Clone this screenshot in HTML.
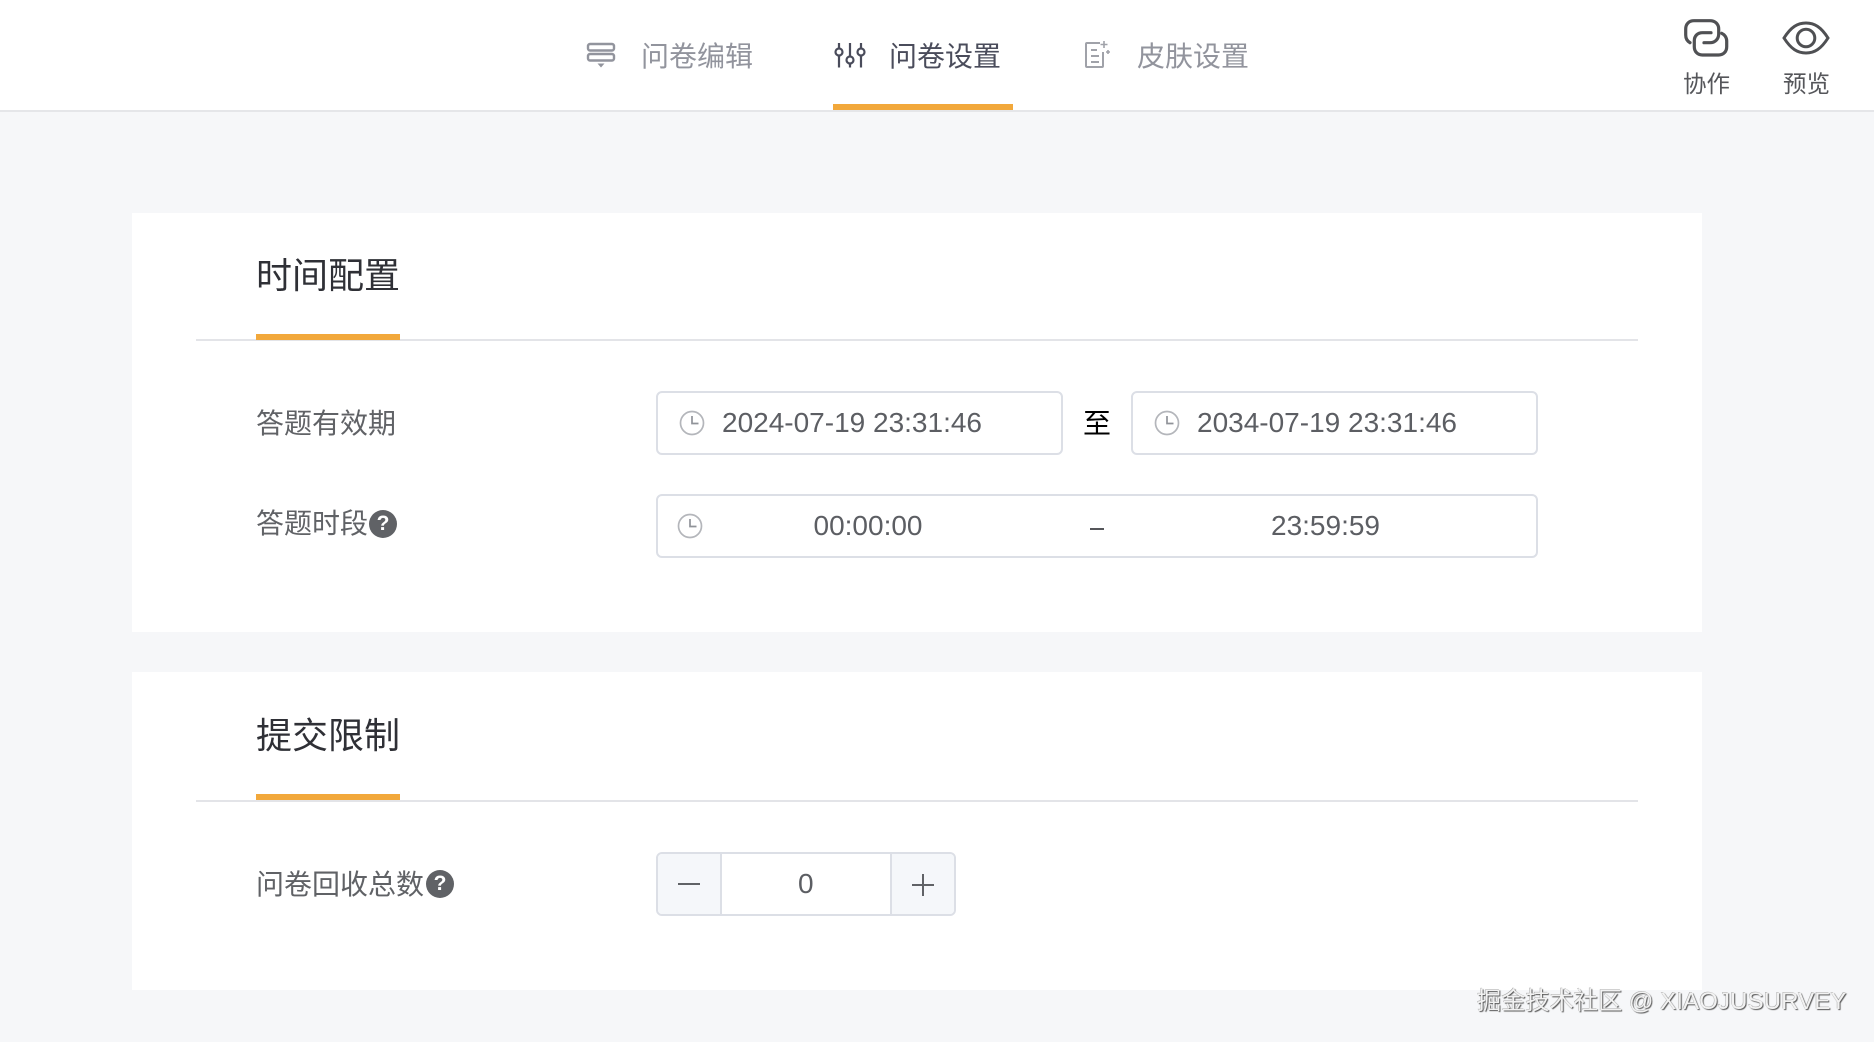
<!DOCTYPE html>
<html lang="zh"><head><meta charset="utf-8"><title>问卷设置</title>
<style>
html,body{margin:0;padding:0}
body{width:1874px;height:1042px;position:relative;overflow:hidden;background:#f6f7f9;font-family:"Liberation Sans","Noto Sans CJK SC",sans-serif;color:#606266;filter:blur(.3px)}
.a{position:absolute}
.t{position:absolute;white-space:nowrap;line-height:40px;height:40px;transform:translateY(-20px)}
.tab{font-size:28px;color:#92949d}
.on{color:#4a4c5b}
.ic{position:absolute;overflow:visible;fill:none}
.card{position:absolute;left:132px;width:1570px;background:#fff}
.line{position:absolute;left:196px;width:1442px;height:2px;background:#e3e4e8}
.bar{position:absolute;left:256px;width:144px;height:6px;background:#f2a83b}
.title{color:#2f3036;font-size:36px}
.lab{font-size:28px;color:#606266}
.box{position:absolute;box-sizing:border-box;border:2px solid #dcdfe6;border-radius:6px;background:#fff}
.val{font-size:28px;color:#5c5e63}
.q{position:absolute;width:28px;height:28px;border-radius:50%;background:#606266;color:#fff;font:bold 21px/28px "Liberation Sans",sans-serif;text-align:center}
</style></head><body>

<div class="a" style="left:0;top:0;width:1874px;height:110px;background:#fff"></div>
<div class="a" style="left:0;top:110px;width:1874px;height:2px;background:#e5e6e9"></div>

<svg class="ic" style="left:586px;top:42px" width="30" height="28" viewBox="0 0 30 28" stroke="#92949d" stroke-width="2.400"><rect x="2" y="2" width="26" height="6.500" rx="2"/><rect x="2" y="12" width="26" height="6.500" rx="2"/><path d="M11.500 21.500h7l-3.500 4z" fill="#92949d" stroke="none"/></svg>
<div class="t tab" style="left:641px;top:57px">问卷编辑</div>

<svg class="ic" style="left:835.500px;top:42px" width="30" height="30" viewBox="0 0 30 30" stroke="#4a4c5b" stroke-width="2.200"><path d="M3 1v5.500M3 13.500v12M14 1v13.500M14 21.500v4M25 1v5.500M25 13.500v12"/><circle cx="3" cy="10" r="3.500"/><circle cx="14" cy="18" r="3.500"/><circle cx="25" cy="10" r="3.500"/></svg>
<div class="t tab on" style="left:889px;top:57px">问卷设置</div>
<div class="a" style="left:833px;top:104px;width:180px;height:6px;background:#f2a83b"></div>

<svg class="ic" style="left:1084px;top:40px" width="28" height="30" viewBox="0 0 28 30" stroke="#a0a2a9" stroke-width="2"><path d="M16 3H3a1 1 0 0 0-1 1v22a1 1 0 0 0 1 1h15a1 1 0 0 0 1-1V12M7 10h6M7 16h8M7 22h8"/><path d="M20 1v7M16.500 4.500h7M24 10v4M22 12h4" stroke-width="1.600"/></svg>
<div class="t tab" style="left:1137px;top:57px">皮肤设置</div>

<svg class="ic" style="left:1684px;top:19px" width="44" height="38" viewBox="0 0 44 38" stroke="#505154" stroke-width="3.200" stroke-linecap="round"><path d="M6 23.700C3 22 1.700 19.500 1.700 16V10C1.700 5 5 1.700 10 1.700H26C31 1.700 34.700 5 34.700 10V15C34.700 20 31 23.700 26 23.700H20"/><path d="M27 13.700H18.500C13.500 13.700 10.300 17 10.300 21.700V27.700C10.300 32.500 13.500 36 18.500 36H34.500C39.500 36 42.700 32.500 42.700 27.700V22C42.700 18.500 40.500 15.500 37.700 14.300"/></svg>
<div class="t" style="left:1683px;top:84px;font-size:23.500px;color:#55565a">协作</div>

<svg class="ic" style="left:1782px;top:20px" width="48" height="36" viewBox="0 0 48 36" stroke="#4f5053" stroke-width="3"><path d="M2 18C9 7 15.500 3 24 3S39 7 46 18C39 29 32.500 33 24 33S9 29 2 18Z"/><circle cx="24" cy="18" r="8.800"/></svg>
<div class="t" style="left:1783px;top:84px;font-size:23.500px;color:#55565a">预览</div>

<div class="card" style="top:213px;height:419px"></div>
<div class="t title" style="left:256px;top:276px">时间配置</div>
<div class="line" style="top:339px"></div>
<div class="bar" style="top:334px"></div>

<div class="t lab" style="left:256px;top:424px">答题有效期</div>

<div class="box" style="left:656px;top:391px;width:407px;height:64px"></div>
<svg class="ic" style="left:679px;top:410px" width="26" height="26" viewBox="0 0 26 26" stroke="#b4b6bb" stroke-width="1.700"><circle cx="13" cy="13" r="11.500"/><path d="M13 6v7.500h6.500" stroke="#909399"/></svg>
<div class="t val" style="left:722px;top:423px">2024-07-19 23:31:46</div>

<div class="t" style="left:1083px;top:424px;font-size:28px;color:#000">至</div>

<div class="box" style="left:1131px;top:391px;width:407px;height:64px"></div>
<svg class="ic" style="left:1154px;top:410px" width="26" height="26" viewBox="0 0 26 26" stroke="#b4b6bb" stroke-width="1.700"><circle cx="13" cy="13" r="11.500"/><path d="M13 6v7.500h6.500" stroke="#909399"/></svg>
<div class="t val" style="left:1197px;top:423px">2034-07-19 23:31:46</div>

<div class="t lab" style="left:256px;top:524px">答题时段</div>
<div class="q" style="left:369px;top:510px">?</div>

<div class="box" style="left:656px;top:494px;width:882px;height:64px"></div>
<svg class="ic" style="left:677px;top:513px" width="26" height="26" viewBox="0 0 26 26" stroke="#b4b6bb" stroke-width="1.700"><circle cx="13" cy="13" r="11.500"/><path d="M13 6v7.500h6.500" stroke="#909399"/></svg>
<div class="t val" style="left:813.500px;top:526px">00:00:00</div>
<div class="a" style="left:1090px;top:528px;width:14px;height:2px;background:#55565a"></div>
<div class="t val" style="left:1271px;top:526px">23:59:59</div>

<div class="card" style="top:672px;height:318px"></div>
<div class="t title" style="left:256px;top:736px">提交限制</div>
<div class="line" style="top:800px"></div>
<div class="bar" style="top:794px"></div>

<div class="t lab" style="left:256px;top:885px">问卷回收总数</div>
<div class="q" style="left:426px;top:870px">?</div>

<div class="box" style="left:656px;top:852px;width:300px;height:64px;overflow:hidden">
  <div class="a" style="left:0;top:0;width:62px;height:60px;background:#f5f7fa;border-right:2px solid #dcdfe6"></div>
  <div class="a" style="left:232px;top:0;width:64px;height:60px;background:#f5f7fa;border-left:2px solid #dcdfe6"></div>
</div>
<div class="a" style="left:678px;top:883px;width:22px;height:2px;background:#606266"></div>
<div class="a" style="left:912px;top:884px;width:22px;height:1.500px;background:#606266"></div>
<div class="a" style="left:922px;top:874px;width:1.500px;height:22px;background:#606266"></div>
<div class="t val" style="left:798px;top:884px">0</div>

<div class="t" style="left:1477px;top:1002px;font-size:24.200px;color:#f2f2f2;text-shadow:1px 1px 1px #555,-.5px -.5px 0 #aaa">掘金技术社区 @ XIAOJUSURVEY</div>
</body></html>
